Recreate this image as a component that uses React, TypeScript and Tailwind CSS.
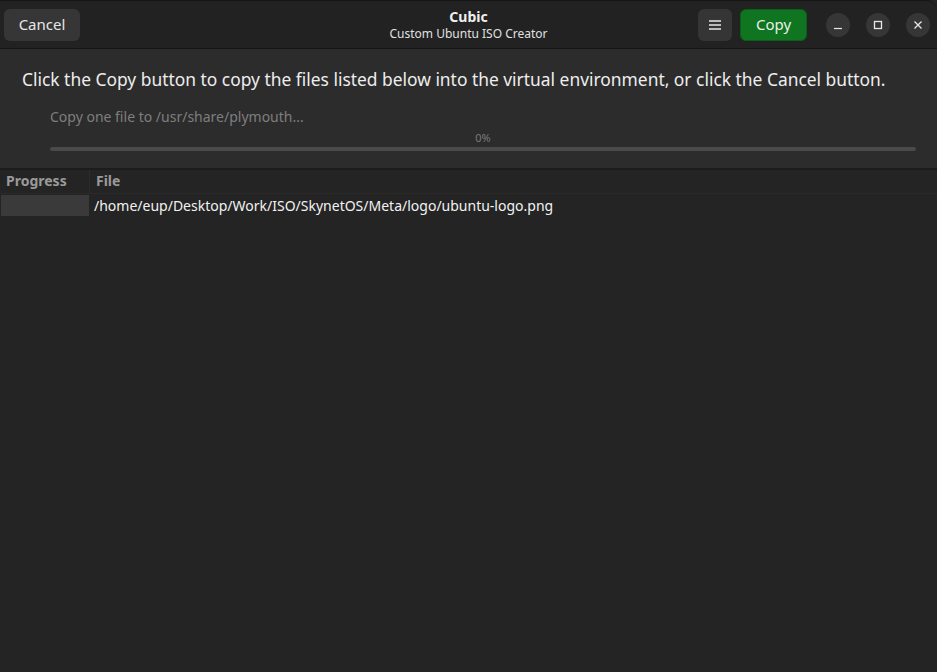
import React from "react";

const font = { fontFamily: '"Noto Sans", "Open Sans", sans-serif' };

export default function App() {
  return (
    <div className="w-[937px] h-[672px] flex flex-col bg-[#242424] overflow-hidden" style={font}>
      {/* header bar */}
      <div className="h-[49px] shrink-0 grid grid-cols-[1fr_auto_1fr] items-center bg-[#222222] border-t border-[#151515] border-b border-b-[#161616] rounded-tr-[10px] pl-[4px] pr-[7px]">
        <div className="flex">
          <button className="h-[32px] w-[76px] rounded-[6px] bg-[#363636] text-[#e6e6e6] text-[15px]">Cancel</button>
        </div>
        <div className="flex flex-col items-center leading-tight pl-[3px]">
          <div className="text-[14px] font-bold text-[#f0f0f0]">Cubic</div>
          <div className="text-[12px] text-[#e0e0e0]">Custom Ubuntu ISO Creator</div>
        </div>
        <div className="flex items-center justify-end">
          <button className="h-[32px] w-[34px] rounded-[6px] bg-[#353535] flex items-center justify-center">
            <svg width="12" height="10" viewBox="0 0 12 10" fill="none" stroke="#e8e8e8" strokeWidth="1.3">
              <path d="M0 1h12M0 5h12M0 9h12" />
            </svg>
          </button>
          <button className="ml-[8px] h-[32px] w-[67px] rounded-[6px] bg-[#0f7520] border border-[#0c5f1a] text-[#e8f0e8] text-[15px]">Copy</button>
          <div className="ml-[19px] flex gap-[16px]">
            <div className="w-[24px] h-[24px] rounded-full bg-[#363636] flex items-center justify-center">
              <svg width="10" height="10" viewBox="0 0 10 10" fill="none" stroke="#e8e8e8" strokeWidth="1.2">
                <path d="M1 8.5h8" />
              </svg>
            </div>
            <div className="w-[24px] h-[24px] rounded-full bg-[#363636] flex items-center justify-center">
              <svg width="10" height="10" viewBox="0 0 10 10" fill="none" stroke="#e8e8e8" strokeWidth="1.3">
                <rect x="1.5" y="1.5" width="7" height="7" />
              </svg>
            </div>
            <div className="w-[24px] h-[24px] rounded-full bg-[#363636] flex items-center justify-center">
              <svg width="10" height="10" viewBox="0 0 10 10" fill="none" stroke="#e8e8e8" strokeWidth="1.3">
                <path d="M1.5 1.5l7 7M8.5 1.5l-7 7" />
              </svg>
            </div>
          </div>
        </div>
      </div>

      {/* content */}
      <div className="h-[119px] shrink-0 bg-[#2c2c2c] flex flex-col">
        <div className="pl-[22px] pt-[18px] text-[17.4px] text-[#eeeeee] leading-[24px] whitespace-nowrap">
          Click the Copy button to copy the files listed below into the virtual environment, or click the Cancel button.
        </div>
        <div className="pl-[50px] pt-[17px] text-[14px] text-[#7e7e7e] leading-[18px]">Copy one file to /usr/share/plymouth...</div>
        <div className="pl-[50px] pr-[21px] pt-[5px]">
          <div className="text-center text-[11px] text-[#7a7a7a] leading-[14px]">0%</div>
          <div className="h-[4px] rounded-full bg-[#4a4a4a] mt-[2px]" />
        </div>
      </div>

      {/* table */}
      <div className="h-[2px] bg-[#1c1c1c] shrink-0" />
      <div className="flex-1 flex flex-col bg-[#242424]">
        <div className="h-[24px] flex border-b border-[#2a2a2a] text-[14px] font-bold text-[#9a9a9a] leading-[22px]">
          <div className="w-[90px] pl-[6px] border-r border-[#2c2c2c]">Progress</div>
          <div className="pl-[6px]">File</div>
        </div>
        <div className="h-[23px] flex items-center">
          <div className="w-[88px] h-[21px] ml-[1px] bg-[#3a3a3a]" />
          <div className="pl-[5px] text-[14px] text-[#f2f2f2]">/home/eup/Desktop/Work/ISO/SkynetOS/Meta/logo/ubuntu-logo.png</div>
        </div>
      </div>
    </div>
  );
}
